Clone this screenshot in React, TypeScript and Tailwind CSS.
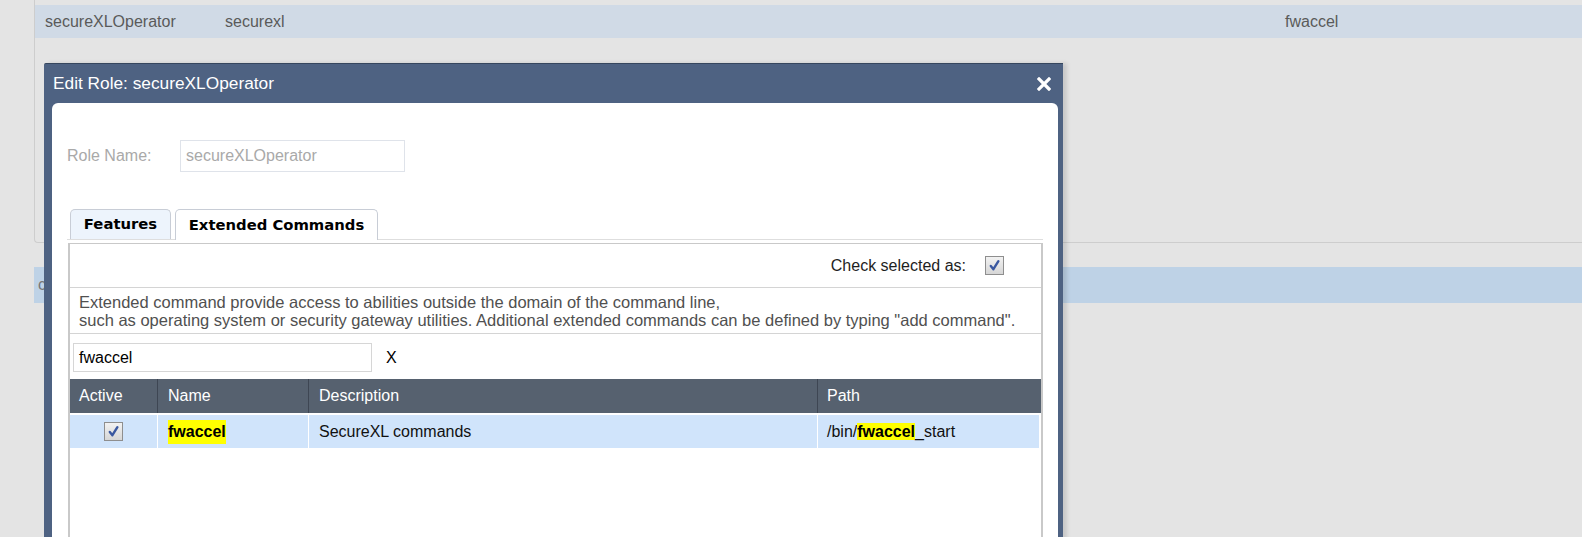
import React from 'react';

// checkbox drawn as box + tick
function CheckBox() {
  return (
    <span className="inline-flex items-center justify-center w-[19px] h-[19px] border border-[#8e8e8e] bg-gradient-to-b from-[#f2f2f2] to-[#d6d6d6]">
      <svg width="13" height="13" viewBox="0 0 13 13">
        <path d="M2.8 7 L5.4 10.2 L10.4 2.2" fill="none" stroke="#3a58a0" strokeWidth="2.4" strokeLinecap="round" strokeLinejoin="round" />
      </svg>
    </span>
  );
}

function Hit({ children }: { children: React.ReactNode }) {
  return <span className="bg-[#ffff00] font-bold text-black">{children}</span>;
}

export default function App() {
  return (
    <div className="relative w-[1582px] h-[537px] overflow-hidden bg-[#e4e4e4] text-[16px] font-['Liberation_Sans',Arial,sans-serif]">
      {/* list behind the dialog */}
      <div className="ml-[34px] h-[243px] pt-[5px] border-l border-b border-[#cdcdcd] rounded-bl-[4px]">
        <div className="h-[33px] bg-[#d0dae6] flex items-center text-[#5a5a5a]">
          <span className="ml-[10px] w-[180px]">secureXLOperator</span>
          <span className="w-[1060px]">securexl</span>
          <span>fwaccel</span>
        </div>
      </div>
      <div className="ml-[34px] mt-[24px] h-[36px] bg-[#bed2e6] flex items-center pl-[4px] text-[#777]">
        <span>c</span>
      </div>

      {/* dialog */}
      <div className="absolute left-[44px] top-[63px] w-[1019px] h-[490px] bg-[#4e6282] border-t border-[#36465e] rounded-tl-[2px] flex flex-col pl-[8px] pr-[5px] shadow-[4px_0_4px_rgba(0,0,0,0.12)]">
        <div className="h-[39px] flex items-center justify-between">
          <span className="ml-[1px] text-white text-[17.3px]">Edit Role: secureXLOperator</span>
          <svg width="14" height="14" viewBox="0 0 14 14" className="mr-[7px]">
            <path d="M2 2 L12 12 M12 2 L2 12" stroke="white" strokeWidth="3.2" strokeLinecap="square" />
          </svg>
        </div>
        <div className="flex-1 bg-white rounded-t-[6px] flex flex-col">
          <div className="mt-[37px] ml-[15px] flex items-center">
            <span className="w-[113px] text-[#a9a9a9]">Role Name:</span>
            <div className="w-[225px] h-[32px] border border-[#dfe3ea] pl-[5px] flex items-center text-[#a9a9a9]">
              secureXLOperator
            </div>
          </div>

          <div className="mt-[37px] ml-[15px] mr-[15px] flex items-end border-b border-[#dedede] h-[31px]">
            <div className="ml-[3px] w-[101px] h-[30px] bg-[#edf4fc] border border-b-0 border-[#c8cdd6] rounded-t-[5px] flex items-center justify-center font-['DejaVu_Sans',sans-serif] font-bold text-[14.8px] text-black">
              Features
            </div>
            <div className="ml-[4px] w-[203px] h-[31px] -mb-px bg-white border border-b-0 border-[#c8cdd6] rounded-t-[5px] flex items-center justify-center font-['DejaVu_Sans',sans-serif] font-bold text-[14.8px] text-black">
              Extended Commands
            </div>
          </div>

          <div className="mt-[3px] ml-[16px] mr-[15px] flex-1 border-l-2 border-r-2 border-t border-[#c9c9c9] flex flex-col">
            <div className="h-[44px] flex items-center justify-end pr-[37px] border-b border-[#d4d4d4] text-[#1e1e1e]">
              <span>Check selected as:</span>
              <span className="ml-[19px] flex">
                <CheckBox />
              </span>
            </div>
            <div className="h-[46px] border-b border-[#d4d4d4] pl-[9px] pt-[5px] leading-[18px] text-[16.5px] text-[#505050]">
              <div>Extended command provide access to abilities outside the domain of the command line,</div>
              <div>such as operating system or security gateway utilities. Additional extended commands can be defined by typing "add command".</div>
            </div>
            <div className="pt-[9px] pl-[3px] flex items-center">
              <div className="w-[299px] h-[29px] border border-[#d6d6d6] pl-[5px] flex items-center text-black">fwaccel</div>
              <span className="ml-[14px] text-black">X</span>
            </div>

            <div className="mt-[7px] grid grid-cols-[88px_151px_509px_1fr]">
              <div className="h-[34px] bg-[#56616f] text-white flex items-center pl-[9px] border-r border-[#3e4653]">Active</div>
              <div className="h-[34px] bg-[#56616f] text-white flex items-center pl-[10px] border-r border-[#3e4653]">Name</div>
              <div className="h-[34px] bg-[#56616f] text-white flex items-center pl-[10px] border-r border-[#3e4653]">Description</div>
              <div className="h-[34px] bg-[#56616f] text-white flex items-center pl-[9px]">Path</div>

              <div className="mt-[2px] h-[33px] bg-[#d0e4fb] flex items-center justify-center border-r border-white">
                <CheckBox />
              </div>
              <div className="mt-[2px] h-[33px] bg-[#d0e4fb] flex items-center pl-[10px] border-r border-white">
                <Hit>fwaccel</Hit>
              </div>
              <div className="mt-[2px] h-[33px] bg-[#d0e4fb] flex items-center pl-[10px] border-r border-white text-[#111]">
                SecureXL commands
              </div>
              <div className="mt-[2px] h-[33px] bg-[#d0e4fb] flex items-center pl-[9px] mr-[2px] text-[#111]">
                <span>/bin/<Hit>fwaccel</Hit>_start</span>
              </div>
            </div>
          </div>
        </div>
      </div>
    </div>
  );
}
